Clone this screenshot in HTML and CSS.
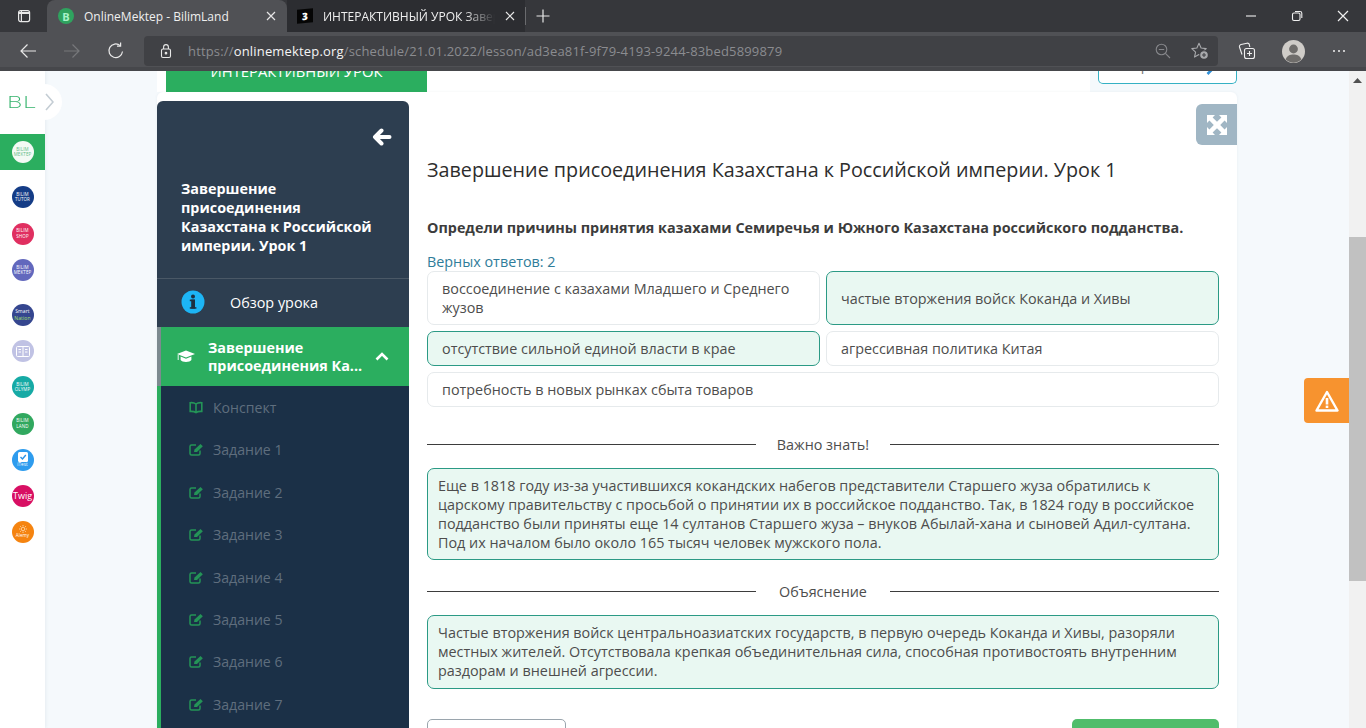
FILE: index.html
```html
<!DOCTYPE html>
<html lang="ru">
<head>
<meta charset="utf-8">
<title>OnlineMektep - BilimLand</title>
<link rel="stylesheet" href="styles.css">
</head>
<body>
<div class="tabbar">
  <div class="tab-actions">
    <svg width="16" height="16" viewBox="0 0 16 16" fill="none" stroke="#e8e8e8" stroke-width="1.2"><rect x="2.6" y="2.6" width="11" height="11" rx="2"/><path d="M5.4 2.6V13.6"/><path d="M2.6 5H13.6" stroke-width="2"/></svg>
  </div>
  <div class="tab tab-active">
    <span class="favicon-b">B</span>
    <span class="tab-title">OnlineMektep - BilimLand</span>
    <svg class="tab-close" width="10" height="10" viewBox="0 0 10 10" stroke="#e6e6e6" stroke-width="1.2"><path d="M1 1L9 9M9 1L1 9"/></svg>
  </div>
  <div class="tab tab-second">
    <span class="favicon-3">3</span>
    <span class="tab-title tab-fade">ИНТЕРАКТИВНЫЙ УРОК Завершение</span>
    <svg class="tab-close" width="10" height="10" viewBox="0 0 10 10" stroke="#e6e6e6" stroke-width="1.2"><path d="M1 1L9 9M9 1L1 9"/></svg>
  </div>
  <div class="tab-sep"></div>
  <svg class="tab-new" width="14" height="14" viewBox="0 0 14 14" stroke="#e8e8e8" stroke-width="1.2"><path d="M7 0.5V13.5M0.5 7H13.5"/></svg>
  <div class="win-controls">
    <svg width="12" height="12" viewBox="0 0 12 12" stroke="#f0f0f0" stroke-width="1.1"><path d="M1 6H11"/></svg>
    <svg width="12" height="12" viewBox="0 0 12 12" fill="none" stroke="#f0f0f0" stroke-width="1.1"><rect x="1.5" y="3" width="7.5" height="7.5" rx="1.5"/><path d="M4 1.5H9A1.8 1.8 0 0 1 10.8 3.3V8"/></svg>
    <svg width="12" height="12" viewBox="0 0 12 12" stroke="#f0f0f0" stroke-width="1.2"><path d="M1 1L11 11M11 1L1 11"/></svg>
  </div>
</div>
<div class="toolbar">
  <div class="nav-buttons">
    <svg width="18" height="18" viewBox="0 0 18 18" fill="none" stroke="#e8e8e8" stroke-width="1.2"><path d="M17 9H2M8.5 2.5L2 9L8.5 15.5"/></svg>
    <svg width="18" height="18" viewBox="0 0 18 18" fill="none" stroke="#77787b" stroke-width="1.2"><path d="M1 9H16M9.5 2.5L16 9L9.5 15.5"/></svg>
    <svg width="18" height="18" viewBox="0 0 18 18" fill="none" stroke="#e8e8e8" stroke-width="1.2"><path d="M15.5 9.5A6.8 6.8 0 1 1 13.2 3.6"/><path d="M13.6 0.6V4.2H10"/></svg>
  </div>
  <div class="address">
    <svg class="lock" width="14" height="16" viewBox="0 0 14 16" fill="none" stroke="#e8e8e8" stroke-width="1.1"><rect x="2.5" y="6" width="9" height="8.5" rx="1.5"/><path d="M4.6 6V4A2.4 2.4 0 0 1 9.4 4V6"/><circle cx="7" cy="10.2" r=".8" fill="#e8e8e8"/></svg>
    <span class="url"><span class="url-dim">https://</span><span class="url-host">onlinemektep.org</span><span class="url-dim">/schedule/21.01.2022/lesson/ad3ea81f-9f79-4193-9244-83bed5899879</span></span>
    <svg class="addr-icon" width="16" height="16" viewBox="0 0 16 16" fill="none" stroke="#85868a" stroke-width="1.1"><circle cx="6.5" cy="6.5" r="5.3"/><path d="M10.4 10.4L15 15M3.8 6.500H9.200"/></svg>
    <svg class="addr-icon addr-star" width="18" height="18" viewBox="0 0 18 18" fill="none" stroke="#a8a9ac" stroke-width="1.1"><path d="M8 1.200L10.100 6L15.200 6.600L11.400 10.100L12.500 15.100L8 12.600L3.500 15.100L4.600 10.100L.8 6.600L5.900 6Z" stroke-linejoin="round"/><circle cx="13" cy="13" r="4.800" fill="#404145" stroke="none"/><circle cx="13" cy="13" r="3.800" fill="#a8a9ac" stroke="none"/><path d="M13 11V15M11 13H15" stroke="#404145"/></svg>
  </div>
  <div class="tool-right">
    <svg width="18" height="18" viewBox="0 0 18 18" fill="none" stroke="#f0f0f0" stroke-width="1.1"><rect x="6.5" y="6.5" width="10" height="10" rx="2"/><path d="M11.5 9V14M9 11.5H14"/><path d="M4 12.5L1.5 5A2 2 0 0 1 3 2.5L9 1.2A2 2 0 0 1 11.4 3L11.8 5"/></svg>
    <span class="avatar"><svg width="23" height="23" viewBox="0 0 23 23"><circle cx="11.5" cy="11.5" r="11.5" fill="#cfccc8"/><circle cx="11.5" cy="9" r="4.4" fill="#6f6d6b"/><path d="M3.6 19.5C5 15.5 8 14.5 11.5 14.5S18 15.5 19.4 19.5A11.5 11.5 0 0 1 3.6 19.5Z" fill="#6f6d6b"/></svg></span>
    <span class="more"><i></i><i></i><i></i></span>
  </div>
</div>
<div class="viewport">
  <aside class="rail">
    <div class="rail-logo"><span class="rail-bl">BL</span></div>
    <div class="rail-toggle"><svg width="9" height="18" viewBox="0 0 9 18" fill="none" stroke="#c4cdd4" stroke-width="1.6"><path d="M1 1L8 9L1 17"/></svg></div>
    <div class="rail-active"><span class="coin coin-white">BILIM<br>MEKTEP</span></div>
    <div class="rail-group">
      <span class="coin c-navy">BILIM<br>TUTOR</span>
      <span class="coin c-red">BILIM<br>SHOP</span>
      <span class="coin c-violet">BILIM<br>MEKTEP</span>
    </div>
    <div class="rail-group rail-group-b">
      <span class="coin c-smart">Smart<br><em>Nation</em></span>
      <span class="coin c-lilac"><svg width="14" height="11" viewBox="0 0 14 11" fill="none" stroke="#fff" stroke-width="1"><rect x=".5" y=".5" width="13" height="10" rx="1"/><path d="M7 .5V10.500M2.500 3.500H5M2.500 6H5M9 3.500H11.500M9 6H11.500"/></svg></span>
      <span class="coin c-teal">BILIM<br>OLYMP</span>
      <span class="coin c-green">BILIM<br>LAND</span>
      <span class="coin c-blue"><svg width="10" height="10" viewBox="0 0 10 10"><rect width="10" height="10" rx="1.5" fill="#fff"/><path d="M2.5 5L4.5 7L7.8 3" fill="none" stroke="#2b93e6" stroke-width="1.4"/></svg>iTest</span>
      <span class="coin c-twig">Twig</span>
      <span class="coin c-orange"><svg width="8" height="8" viewBox="0 0 8 8" fill="none" stroke="#ffe0b8" stroke-width=".8"><circle cx="4" cy="4" r="1.800"/><path d="M4 0V1.200M4 6.800V8M0 4H1.200M6.800 4H8M1.200 1.200L2 2M6 6L6.800 6.800M6.800 1.200L6 2M2 6L1.200 6.800"/></svg>Alemy</span>
    </div>
  </aside>
  <main class="stage">
    <div class="wrap">
      <div class="top-strip">
        <div class="top-left"><a class="btn-lesson">ИНТЕРАКТИВНЫЙ УРОК</a></div>
        <div class="top-right"><a class="btn-next"><span>Сроки</span><svg width="8" height="12" viewBox="0 0 8 12" fill="none" stroke="#2f8fd8" stroke-width="2.6"><path d="M1.5 1L6.5 6L1.5 11"/></svg></a></div>
      </div>
      <div class="card">
        <nav class="side">
          <div class="side-head">
            <svg class="side-back" width="20" height="18" viewBox="0 0 20 18" fill="none" stroke="#fff" stroke-width="4" stroke-linecap="round" stroke-linejoin="round"><path d="M17.500 9H3M9.500 2.500L3 9L9.500 15.500"/></svg>
            <div class="side-title">Завершение присоединения Казахстана к Российской империи. Урок 1</div>
          </div>
          <div class="side-overview">
            <svg width="24" height="24" viewBox="0 0 24 24"><circle cx="12" cy="12" r="11.5" fill="#1db5f5"/><rect x="10.2" y="9.6" width="3.8" height="9" fill="#1d3040"/><rect x="8.8" y="9.6" width="5" height="1.6" fill="#1d3040"/><rect x="8.8" y="17.2" width="6.6" height="1.5" fill="#1d3040"/><circle cx="12" cy="6.4" r="2" fill="#1d3040"/></svg>
            <span>Обзор урока</span>
          </div>
          <div class="side-active">
            <svg width="18" height="14" viewBox="0 0 18 14" fill="#fff"><path d="M9 0.5L18 4L9 7.5L0 4Z"/><path d="M3.6 6.6V10C5 12.6 13 12.6 14.4 10V6.6L9 8.8Z"/><path d="M1.2 4.8V10" stroke="#fff" stroke-width=".9"/></svg>
            <span class="side-active-text">Завершение присоединения Ка...</span>
            <svg width="14" height="9" viewBox="0 0 14 9" fill="none" stroke="#fff" stroke-width="2.6"><path d="M1.5 7.5L7 2L12.5 7.5"/></svg>
          </div>
          <ul class="side-list">
            <li><svg class="ico-book" width="14" height="13" viewBox="0 0 14 13" fill="none" stroke="#249457" stroke-width="1.6"><path d="M7 3C5.5 1.8 3.5 1.5 1.2 1.7V10.4C3.5 10.2 5.5 10.5 7 11.6C8.5 10.5 10.5 10.2 12.8 10.4V1.7C10.500 1.500 8.5 1.800 7 3ZM7 3V11.600"/></svg>Конспект</li>
            <li><svg width="15" height="13" viewBox="0 0 15 13" fill="none" stroke="#249457" stroke-width="1.5"><path d="M11 7.500V10.500A1.500 1.500 0 0 1 9.500 12H2.500A1.500 1.500 0 0 1 1 10.500V3.500A1.500 1.500 0 0 1 2.500 2H7"/><path d="M5 9L5.500 6.500L11.500 1L13.800 3.200L8 9Z" fill="#249457" stroke="none"/></svg>Задание 1</li>
            <li><svg width="15" height="13" viewBox="0 0 15 13" fill="none" stroke="#249457" stroke-width="1.5"><path d="M11 7.500V10.500A1.500 1.500 0 0 1 9.500 12H2.500A1.500 1.500 0 0 1 1 10.500V3.500A1.500 1.500 0 0 1 2.500 2H7"/><path d="M5 9L5.500 6.500L11.500 1L13.800 3.200L8 9Z" fill="#249457" stroke="none"/></svg>Задание 2</li>
            <li><svg width="15" height="13" viewBox="0 0 15 13" fill="none" stroke="#249457" stroke-width="1.5"><path d="M11 7.500V10.500A1.500 1.500 0 0 1 9.500 12H2.500A1.500 1.500 0 0 1 1 10.500V3.500A1.500 1.500 0 0 1 2.500 2H7"/><path d="M5 9L5.500 6.500L11.500 1L13.800 3.200L8 9Z" fill="#249457" stroke="none"/></svg>Задание 3</li>
            <li><svg width="15" height="13" viewBox="0 0 15 13" fill="none" stroke="#249457" stroke-width="1.5"><path d="M11 7.500V10.500A1.500 1.500 0 0 1 9.500 12H2.500A1.500 1.500 0 0 1 1 10.500V3.500A1.500 1.500 0 0 1 2.500 2H7"/><path d="M5 9L5.500 6.500L11.500 1L13.800 3.200L8 9Z" fill="#249457" stroke="none"/></svg>Задание 4</li>
            <li><svg width="15" height="13" viewBox="0 0 15 13" fill="none" stroke="#249457" stroke-width="1.5"><path d="M11 7.500V10.500A1.500 1.500 0 0 1 9.500 12H2.500A1.500 1.500 0 0 1 1 10.500V3.500A1.500 1.500 0 0 1 2.500 2H7"/><path d="M5 9L5.500 6.500L11.500 1L13.800 3.200L8 9Z" fill="#249457" stroke="none"/></svg>Задание 5</li>
            <li><svg width="15" height="13" viewBox="0 0 15 13" fill="none" stroke="#249457" stroke-width="1.5"><path d="M11 7.500V10.500A1.500 1.500 0 0 1 9.500 12H2.500A1.500 1.500 0 0 1 1 10.500V3.500A1.500 1.500 0 0 1 2.500 2H7"/><path d="M5 9L5.500 6.500L11.500 1L13.800 3.200L8 9Z" fill="#249457" stroke="none"/></svg>Задание 6</li>
            <li><svg width="15" height="13" viewBox="0 0 15 13" fill="none" stroke="#249457" stroke-width="1.5"><path d="M11 7.500V10.500A1.500 1.500 0 0 1 9.500 12H2.500A1.500 1.500 0 0 1 1 10.500V3.500A1.500 1.500 0 0 1 2.500 2H7"/><path d="M5 9L5.500 6.500L11.500 1L13.800 3.200L8 9Z" fill="#249457" stroke="none"/></svg>Задание 7</li>
          </ul>
        </nav>
        <section class="lesson">
          <a class="expand"><svg width="20" height="20" viewBox="0 0 20 20" fill="#fff"><path d="M0 0H8L5.600 2.400L10 6.800L14.400 2.400L12 0H20V8L17.600 5.600L13.200 10L17.600 14.400L20 12V20H12L14.400 17.600L10 13.200L5.600 17.600L8 20H0V12L2.400 14.400L6.800 10L2.400 5.600L0 8Z"/></svg></a>
          <h1 class="lesson-title">Завершение присоединения Казахстана к Российской империи. Урок 1</h1>
          <p class="question">Определи причины принятия казахами Семиречья и Южного Казахстана российского подданства.</p>
          <div class="counter">Верных ответов: 2</div>
          <div class="options">
            <div class="option">воссоединение с казахами Младшего и Среднего жузов</div>
            <div class="option option-right">частые вторжения войск Коканда и Хивы</div>
            <div class="option option-right">отсутствие сильной единой власти в крае</div>
            <div class="option">агрессивная политика Китая</div>
            <div class="option option-wide">потребность в новых рынках сбыта товаров</div>
          </div>
          <div class="divider"><span>Важно знать!</span></div>
          <div class="note">Еще в 1818 году из-за участившихся кокандских набегов представители Старшего жуза обратились к царскому правительству с просьбой о принятии их в российское подданство. Так, в 1824 году в российское подданство были приняты еще 14 султанов Старшего жуза – внуков Абылай-хана и сыновей Адил-султана. Под их началом было около 165 тысяч человек мужского пола.</div>
          <div class="divider divider-b"><span>Объяснение</span></div>
          <div class="note note-short">Частые вторжения войск центральноазиатских государств, в первую очередь Коканда и Хивы, разоряли местных жителей. Отсутствовала крепкая объединительная сила, способная противостоять внутренним раздорам и внешней агрессии.</div>
          <div class="lesson-actions"><a class="btn-back">Назад</a><a class="btn-forward">Далее</a></div>
        </section>
      </div>
    </div>
    <a class="warn"><svg width="24" height="22" viewBox="0 0 24 22"><path d="M12 2L22.500 20.500H1.500Z" fill="none" stroke="#fff" stroke-width="2.400" stroke-linejoin="round"/><rect x="10.700" y="8" width="2.600" height="6.500" fill="#fff"/><rect x="10.700" y="15.600" width="2.600" height="2.400" fill="#fff"/></svg></a>
  </main>
  <div class="scrollbar">
    <svg class="scroll-up" width="9" height="5" viewBox="0 0 9 5" fill="#505050"><path d="M0 5L4.500 0L9 5Z"/></svg>
    <div class="scroll-thumb"></div>
  </div>
</div>
</body>
</html>
```
FILE: styles.css
```css
* { box-sizing: border-box; }
html, body { margin: 0; height: 100%; overflow: hidden; }
body { font-family: "Open Sans", "Noto Sans", sans-serif; color: #4a4a4a; background: #f5f9fc; display: flex; flex-direction: column; }

.tabbar { height: 32px; flex: none; background: #36373b; display: flex; align-items: stretch; font-size: 12px; color: #efefef; }
.tab-actions { width: 47px; flex: none; display: flex; align-items: center; justify-content: center; }
.tab { flex: none; display: flex; align-items: center; gap: 10px; }
.tab-active { width: 240px; padding: 0 11px; background: #505155; border-radius: 8px 8px 0 0; }
.tab-second { width: 238px; padding: 0 10px; background: #2c2d31; }
.tab-title { flex: 1; white-space: nowrap; overflow: hidden; }
.tab-fade { -webkit-mask-image: linear-gradient(90deg, #000 82%, transparent 100%); mask-image: linear-gradient(90deg, #000 82%, transparent 100%); }
.tab-close { flex: none; }
.favicon-b { width: 16px; height: 16px; border-radius: 50%; background: #2fa35f; color: #a8f2c8; font-size: 11px; font-weight: 700; display: flex; align-items: center; justify-content: center; flex: none; }
.favicon-3 { width: 16px; height: 14px; background: #050505; color: #fff; font-size: 10px; font-weight: 800; display: flex; align-items: center; justify-content: center; flex: none; transform: skewY(-5deg); }
.tab-sep { width: 1px; height: 18px; background: #6a6b6e; align-self: center; flex: none; }
.tab-new { align-self: center; flex: none; margin-left: 10px; }
.win-controls { margin-left: auto; display: flex; align-items: center; gap: 34px; padding: 0 17px 0 0; }

.toolbar { height: 39px; flex: none; background: #505155; border-bottom: 4px solid #46474b; display: flex; align-items: flex-start; }
.nav-buttons { width: 144px; flex: none; height: 30px; margin-top: 4px; display: flex; align-items: center; gap: 26px; padding-left: 19px; }
.address { width: 1074px; flex: none; height: 30px; margin-top: 4px; background: #404145; border-radius: 4px; display: flex; align-items: center; padding: 0 9px 0 15px; }
.lock { flex: none; }
.url { margin-left: 15px; font-size: 13px; letter-spacing: .17px; white-space: nowrap; flex: 1; }
.url-dim { color: #8b8c90; }
.url-host { color: #f4f4f4; }
.addr-icon { flex: none; }
.addr-star { margin-left: 20px; }
.tool-right { flex: 1; height: 30px; margin-top: 4px; display: flex; align-items: center; padding-left: 20px; }
.avatar { display: flex; margin-left: 26px; }
.more { display: flex; gap: 3px; margin-left: 28px; }
.more i { width: 2px; height: 2px; background: #f0f0f0; border-radius: 50%; display: block; }

.viewport { flex: 1; min-height: 0; display: flex; position: relative; overflow: hidden; }
.rail { width: 45px; flex: none; background: #fff; display: flex; flex-direction: column; align-items: stretch; box-shadow: 1px 0 3px rgba(60, 90, 120, .08); position: relative; z-index: 2; }
.rail-logo { height: 63px; display: flex; align-items: center; padding: 0 0 1px 7px; position: relative; z-index: 4; }
.rail-bl { font-family: "Inter", sans-serif; font-weight: 200; font-size: 16px; letter-spacing: .3px; color: #34b36c; transform: scaleX(1.5); transform-origin: left center; }
.rail-toggle { position: absolute; left: 26px; top: 13px; width: 36px; height: 36px; border-radius: 50%; background: #fff; display: flex; align-items: center; justify-content: flex-end; padding-right: 8px; z-index: 3; }
.rail-active { height: 36px; background: #2bae5f; display: flex; align-items: center; justify-content: center; }
.rail-group { display: flex; flex-direction: column; align-items: center; gap: 14.500px; padding-top: 16px; }
.rail-group-b { gap: 14.200px; padding-top: 23px; }
.coin { width: 22px; height: 22px; border-radius: 50%; color: #fff; font-size: 4.500px; line-height: 5.500px; text-align: center; display: flex; flex-direction: column; align-items: center; justify-content: center; overflow: hidden; font-weight: 400; white-space: nowrap; letter-spacing: .1px; }
.coin em { font-style: normal; color: #a6e06a; }
.coin-white { background: #f3faf5; color: #5fbb85; }
.c-navy { background: #143c86; }
.c-red { background: #e02f60; }
.c-violet { background: #6268bd; }
.c-smart { background: #35468f; font-size: 5px; line-height: 7px; }
.c-lilac { background: #c0c2e4; }
.c-teal { background: #16aaa5; }
.c-green { background: #31a85f; }
.c-blue { background: #2e9cee; }
.c-twig { background: #d80f63; font-size: 9px; font-weight: 500; letter-spacing: 0; }
.c-orange { background: #f58410; }

.stage { flex: 1; min-width: 0; position: relative; overflow: hidden; }
.wrap { width: 1080px; margin: -30px auto 0; }
.top-strip { height: 51px; display: flex; justify-content: space-between; background: #fff; }
.top-left { padding-left: 9px; }
.btn-lesson { width: 261px; height: 51px; background: #2bae5f; color: #fff; font-size: 14.800px; display: flex; align-items: flex-end; justify-content: center; padding-bottom: 11px; line-height: 20px; }
.top-right { width: 147px; background: #f5f9fc; padding-left: 8px; height: 51px; }
.btn-next { display: flex; height: 43px; border: 1px solid #35b1c4; border-top: 0; border-radius: 0 0 5px 5px; background: #fff; align-items: flex-end; justify-content: space-between; padding: 0 22px 9px 33px; font-size: 14px; line-height: 19px; color: #777; overflow: hidden; }
.btn-next svg { margin-bottom: -1px; }
.card { display: flex; background: #fff; border-radius: 6px 6px 0 0; position: relative; padding-top: 9px; box-shadow: 0 0 3px rgba(80, 110, 140, .08); }
.side { width: 252px; flex: none; background: #2d3e50; border-radius: 6px 6px 0 0; overflow: hidden; }
.side-head { height: 178px; position: relative; padding: 78px 20px 0 24px; border-bottom: 1px solid #4a5866; }
.side-back { position: absolute; right: 17px; top: 27px; }
.side-title { font-size: 14.360px; font-weight: 700; line-height: 19px; color: #fff; }
.side-overview { height: 48px; display: flex; align-items: center; padding: 0 0 2px 24px; gap: 25px; font-size: 14.400px; color: #fff; }
.side-active { height: 59.400px; background: #2bae5f; border-left: 4px solid #7d8a90; display: flex; align-items: center; padding: 0 20px 0 16px; color: #fff; font-size: 14.360px; font-weight: 700; line-height: 18px; }
.side-active svg:first-child { flex: none; }
.side-active-text { flex: 1; padding: 0 8px 0 13px; }
.side-list { list-style: none; margin: 0; padding: 0 0 40px; background: #1b3047; border-left: 4px solid #2bae5f; }
.side-list li { height: 42.400px; display: flex; align-items: center; padding-left: 28px; gap: 9px; font-size: 14.100px; color: #5f6e7e; }
.side-list svg { flex: none; }
.ico-book { margin-right: 1px; }

.lesson { flex: 1; min-width: 0; padding: 55px 18px 0; position: relative; }
.expand { position: absolute; right: 0; top: 3px; width: 41px; height: 41px; background: #a0b6c4; border-radius: 6px 0 0 6px; display: flex; align-items: center; justify-content: center; }
.lesson-title { margin: 0; font-size: 19.740px; line-height: 27px; font-weight: 400; color: #2d2d2d; }
.question { margin: 35px 0 0; font-size: 14.360px; line-height: 19px; font-weight: 700; color: #3c3c3c; }
.counter { margin-top: 15px; font-size: 14.360px; line-height: 19px; color: #2f7d9a; }
.options { display: grid; grid-template-columns: 393px 393px; gap: 6px; font-size: 14.360px; line-height: 19px; color: #4d4d4d; }
.option { border: 1px solid #e6eaec; border-radius: 7px; padding: 7px 14px; display: flex; align-items: center; background: #fff; }
.option-right { background: #e9f8f2; border-color: #2b9a85; }
.option-wide { grid-column: 1 / -1; }
.divider { margin-top: 28px; display: grid; grid-template-columns: 1fr 134px 1fr; align-items: center; font-size: 14.360px; line-height: 19px; color: #4d4d4d; }
.divider span { grid-column: 2; text-align: center; }
.divider::before, .divider::after { content: ""; height: 1px; background: #3d3d3d; }
.divider::before { grid-column: 1; grid-row: 1; }
.divider::after { grid-column: 3; grid-row: 1; }
.divider + .note { margin-top: 14px; }
.divider-b { margin-top: 22px; }
.note { background: #e9f8f2; border: 1px solid #2b9a85; border-radius: 7px; padding: 7px 10px; font-size: 14.360px; line-height: 19px; color: #4d4d4d; }
.note-short { min-height: 74px; }
.lesson-actions { display: flex; justify-content: space-between; margin-top: 30px; }
.btn-back { width: 139px; height: 40px; border: 1px solid #9aa5ad; border-radius: 5px; background: #fff; display: flex; align-items: center; justify-content: center; font-size: 14px; }
.btn-forward { width: 147px; height: 40px; background: #50bd6b; border-radius: 5px; color: #fff; display: flex; align-items: center; justify-content: center; font-size: 14px; }

.warn { position: absolute; right: 0; top: 307px; width: 45px; height: 45px; background: #f7932f; border-radius: 4px 0 0 4px; display: flex; align-items: center; justify-content: center; }
.scrollbar { width: 17px; flex: none; background: #f1f1f1; position: relative; }
.scroll-up { position: absolute; left: 4px; top: 7px; }
.scroll-thumb { position: absolute; left: 0; right: 0; top: 166px; height: 344px; background: #c1c1c1; }
```
